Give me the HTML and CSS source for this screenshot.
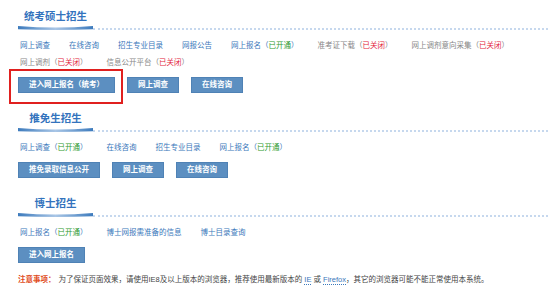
FILE: index.html
```html
<!DOCTYPE html>
<html lang="zh-CN">
<head>
    <meta charset="UTF-8">
    <title>研究生招生</title>
    <link rel="stylesheet" href="styles.css">
</head>
<body>
    <div class="page">

        <!-- 统考硕士 -->
        <div class="section">
            <div class="title">
                <div class="tab">
                    <h2>统考硕士招生</h2>
                    <svg class="ribbon" width="75" height="4" viewBox="0 0 75 4">
                        <defs>
                            <linearGradient id="rb1" x1="0" x2="1" y1="0" y2="0">
                                <stop offset="0" stop-color="#3d7bbd"/>
                                <stop offset="0.5" stop-color="#a9c6e6"/>
                                <stop offset="1" stop-color="#3d7bbd"/>
                            </linearGradient>
                        </defs>
                        <path d="M0 0 Q37.5 3 75 0 L75 3.2 Q37.5 4.6 0 3.2 Z" fill="url(#rb1)"/>
                    </svg>
                </div>
                <div class="rule"></div>
            </div>
            <ul class="links">
                <li><a href="#">网上调查</a></li>
                <li><a href="#">在线咨询</a></li>
                <li><a href="#">招生专业目录</a></li>
                <li><a href="#">网报公告</a></li>
                <li><a href="#">网上报名（<span class="open">已开通</span>）</a></li>
                <li class="off">准考证下载（<span class="closed">已关闭</span>）</li>
                <li class="off">网上调剂意向采集（<span class="closed">已关闭</span>）</li>
                <li class="off">网上调剂（<span class="closed">已关闭</span>）</li>
                <li class="off">信息公开平台（<span class="closed">已关闭</span>）</li>
            </ul>
            <div class="buttons">
                <span class="marked"><a class="btn" href="#">进入网上报名（统考）</a></span>
                <a class="btn" href="#">网上调查</a>
                <a class="btn" href="#">在线咨询</a>
            </div>
        </div>

        <!-- 推免生 -->
        <div class="section">
            <div class="title">
                <div class="tab">
                    <h2>推免生招生</h2>
                    <svg class="ribbon" width="75" height="4" viewBox="0 0 75 4">
                        <path d="M0 0 Q37.5 3 75 0 L75 3.2 Q37.5 4.6 0 3.2 Z" fill="url(#rb1)"/>
                    </svg>
                </div>
                <div class="rule"></div>
            </div>
            <ul class="links">
                <li><a href="#">网上调查（<span class="open">已开通</span>）</a></li>
                <li><a href="#">在线咨询</a></li>
                <li><a href="#">招生专业目录</a></li>
                <li><a href="#">网上报名（<span class="open">已开通</span>）</a></li>
            </ul>
            <div class="buttons">
                <a class="btn" href="#">推免录取信息公开</a>
                <a class="btn" href="#">网上调查</a>
                <a class="btn" href="#">在线咨询</a>
            </div>
        </div>

        <!-- 博士 -->
        <div class="section">
            <div class="title">
                <div class="tab">
                    <h2>博士招生</h2>
                    <svg class="ribbon" width="75" height="4" viewBox="0 0 75 4">
                        <path d="M0 0 Q37.5 3 75 0 L75 3.2 Q37.5 4.6 0 3.2 Z" fill="url(#rb1)"/>
                    </svg>
                </div>
                <div class="rule"></div>
            </div>
            <ul class="links">
                <li><a href="#">网上报名（<span class="open">已开通</span>）</a></li>
                <li><a href="#">博士网报需准备的信息</a></li>
                <li><a href="#">博士目录查询</a></li>
            </ul>
            <div class="buttons">
                <a class="btn" href="#">进入网上报名</a>
            </div>
        </div>

        <p class="notice">
            <strong>注意事项：</strong>为了保证页面效果，请使用IE8及以上版本的浏览器，推荐使用最新版本的 <a href="#">IE</a> 或 <a href="#">Firefox</a>，其它的浏览器可能不能正常使用本系统。
        </p>
    </div>
</body>
</html>
```

FILE: styles.css
```css
/* General */
body {
    margin: 0;
    padding: 0;
    background: #fff;
    font-family: "Liberation Sans", "Noto Sans CJK SC", sans-serif;
    font-size: 7.5px;
    color: #444;
}

a {
    text-decoration: none;
}

.page {
    padding: 8px 5px 0 18px;
}

.section + .section {
    margin-top: 17px;
}

/* Section title */
.title {
    display: flex;
    align-items: flex-end;
}

.tab {
    width: 75px;
}

.tab h2 {
    margin: 0;
    font-size: 10.5px;
    line-height: 16px;
    font-weight: bold;
    color: #3373bd;
    text-align: center;
    font-family: "Noto Sans CJK SC", sans-serif;
}

.ribbon {
    display: block;
    margin-top: 2px;
}

.rule {
    flex: 1;
    height: 0;
    border-bottom: 2px dotted #c6d8ee;
}

/* Links */
.links {
    list-style: none;
    margin: 7px 0 0;
    padding: 0 0 0 2px;
    display: flex;
    flex-wrap: wrap;
    column-gap: 19px;
    line-height: 17px;
}

.links a {
    color: #3b78bb;
}

.links .off {
    color: #888;
}

.open {
    color: #2e9a2e;
}

.closed {
    color: #e3243d;
}

/* Buttons */
.buttons {
    margin-top: 6px;
    display: flex;
    gap: 12px;
}

.btn {
    display: block;
    height: 14px;
    line-height: 14px;
    padding: 0 10px;
    background: #5c8fc1;
    border: 1px solid #4f82b5;
    color: #fff;
    font-weight: bold;
    font-size: 7.5px;
}

.marked {
    position: relative;
}

.marked::after {
    content: "";
    position: absolute;
    top: -8px;
    left: -9px;
    right: -8px;
    bottom: -11px;
    border: 2px solid #e0201f;
    pointer-events: none;
}

/* Notice */
.notice {
    margin: 8px 0 0;
    line-height: 17px;
    color: #444;
}

.notice strong {
    color: #e04a1a;
    margin-right: 3px;
}

.notice a {
    color: #3b78bb;
    border-bottom: 1px dotted #3b78bb;
}
```
